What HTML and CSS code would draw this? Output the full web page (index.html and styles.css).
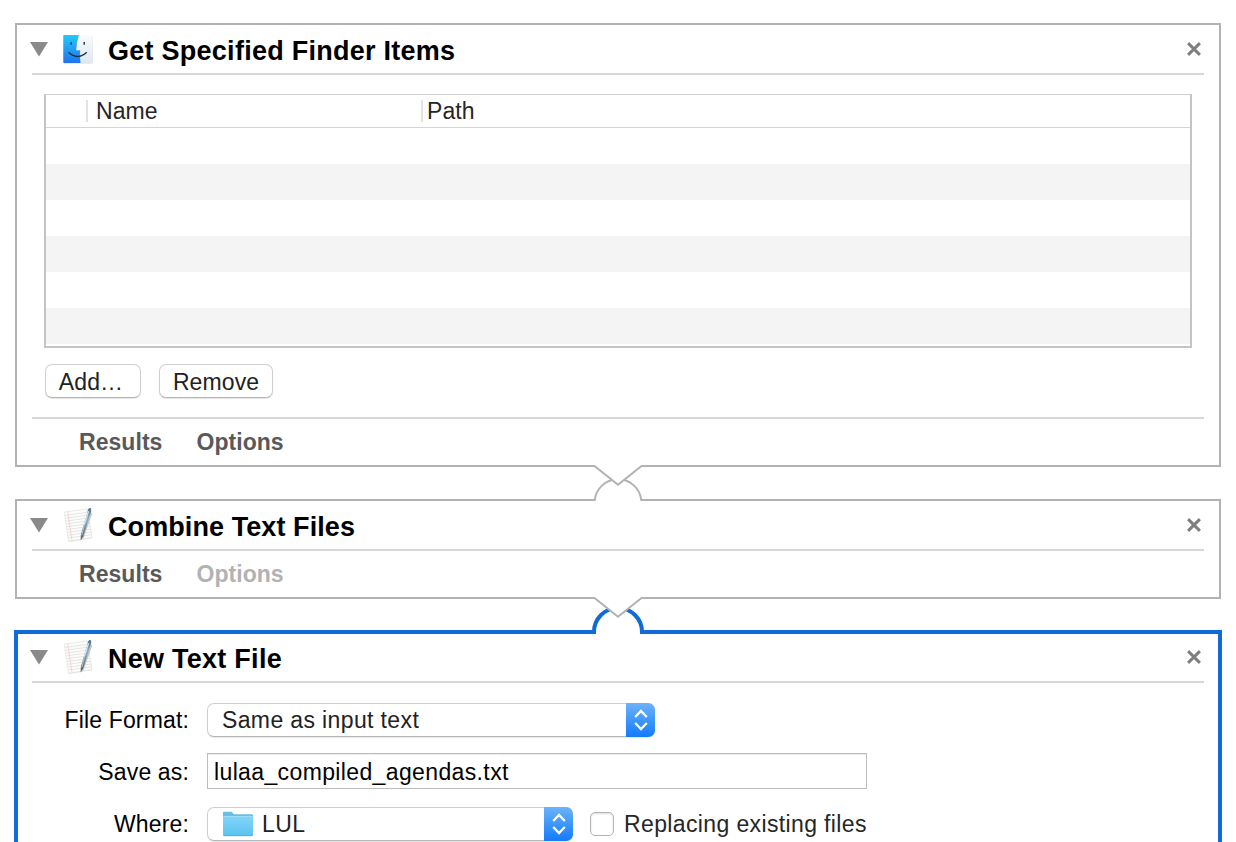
FILE: index.html
```html
<!DOCTYPE html>
<html lang="en">
<head>
<meta charset="utf-8">
<title>Workflow</title>
<link rel="stylesheet" href="styles.css">
</head>
<body>
<svg class="defs" width="0" height="0" aria-hidden="true">
  <defs>
    <linearGradient id="face-left" x1="0" y1="0" x2="0" y2="1"><stop offset="0" stop-color="#20cbfb"/><stop offset="1" stop-color="#2272ec"/></linearGradient>
    <linearGradient id="face-right" x1="0" y1="0" x2="0" y2="1"><stop offset="0" stop-color="#fafbfc"/><stop offset="1" stop-color="#dfe7f0"/></linearGradient>
    <linearGradient id="folder-front" x1="0" y1="0" x2="0" y2="1"><stop offset="0" stop-color="#81d4f8"/><stop offset="1" stop-color="#5bc3f1"/></linearGradient>
    <linearGradient id="pen" x1="0" y1="0" x2="0" y2="1"><stop offset="0" stop-color="#557087"/><stop offset=".35" stop-color="#8fb0c8"/><stop offset="1" stop-color="#565a5e"/></linearGradient>
    <symbol id="cross" viewBox="0 0 14 14"><path d="M1.1 1.1 12.9 12.9M12.9 1.1 1.1 12.9" fill="none" stroke="#7f7f7f" stroke-width="2.9"/></symbol>
    <symbol id="triangle" viewBox="0 0 18 15"><path d="M0 0H18L9 14.6Z" fill="#8a8a8a"/></symbol>
    <symbol id="chevrons" viewBox="0 0 14 22"><path d="M1.2 8 7 2 12.8 8M1.2 14 7 20 12.8 14" fill="none" stroke="#fff" stroke-width="2.3"/></symbol>
    <symbol id="textedit" viewBox="0 0 32 36">
      <path d="M2.6 5.6 25 2.4 30.4 31 7 35Z" fill="#dcdcdc"/>
      <path d="M2.2 5 25 1.9 30 30.6 6.6 34.2Z" fill="#fcfcfb" stroke="#e2e2e2" stroke-width=".7"/>
      <path d="M3 8.5 25.6 5.4M3.4 11.3 26 8.2M3.8 14.1 26.5 11M4.3 16.9 27 13.8M4.8 19.7 27.4 16.6M5.2 22.5 27.9 19.4M5.7 25.3 28.3 22.2M6.1 28.1 28.8 25M6.6 30.9 29.2 27.8" stroke="#e2e2e2" stroke-width=".9"/>
      <path d="M5.6 4.8 10 33.4" stroke="#f7cdc8" stroke-width=".8"/>
      <path d="M29.6 6 20.6 31.5" stroke="#c4c4c4" stroke-width="1.5"/>
      <path d="M26.2 2.2Q27.6.4 29.2 1.6L29.2 4.6 21.2 29.6 18.6 33.6 18.8 28Z" fill="url(#pen)"/>
      <path d="M26.5 4.2 22.2 17.8" stroke="#d2e7f4" stroke-width="1.3"/>
      <path d="M22.2 18.4 19.8 28.4" stroke="#c4c4c4" stroke-width=".9"/>
    </symbol>
  </defs>
</svg>

<main class="workflow">
  <section class="action">
    <header class="action-head">
      <svg class="triangle"><use href="#triangle"/></svg>
      <svg class="app-icon" viewBox="0 0 32 36">
        <rect x="1.5" y="4.6" width="29" height="28" rx="1" fill="#cfd4da"/>
        <rect x="1.5" y="4" width="29" height="28" rx="1" fill="url(#face-right)"/>
        <path d="M2 4H16.8Q14.2 11 14 19.5H18Q17.4 26 18.4 32H2.2Q1.3 32 1.3 31V5Q1.3 4 2 4Z" fill="url(#face-left)"/>
        <path d="M16.8 4.2Q14.2 11 14 19.5H18Q17.5 26 18.4 32" fill="none" stroke="#28659b" stroke-opacity=".35" stroke-width=".6"/>
        <path d="M9.2 10.9V13.7M22.2 10.9V13.7" stroke="#17314c" stroke-width="1.4"/>
        <path d="M6.5 21.3Q15.6 29.8 24.8 21.3" fill="none" stroke="#17314c" stroke-width="1.3"/>
      </svg>
      <h2 class="title">Get Specified Finder Items</h2>
      <svg class="cross"><use href="#cross"/></svg>
    </header>
    <div class="items">
      <div class="table">
        <div class="table-head"><span class="col-icon"></span><span class="col-name">Name</span><span class="col-path">Path</span></div>
        <div class="row"></div><div class="row"></div><div class="row"></div><div class="row"></div><div class="row"></div><div class="row"></div>
      </div>
      <div class="buttons"><button class="button add">Add…</button><button class="button remove">Remove</button></div>
    </div>
    <footer class="action-foot ruled"><span class="tab">Results</span><span class="tab">Options</span></footer>
    <svg class="connector" viewBox="0 0 56 48">
      <path d="M4.5 37V36A23.5 23.5 0 0 1 51.5 36V37Z" fill="#fff"/>
      <path d="M4.7 36V35.5A23.4 23.4 0 0 1 51.3 35.5V36" fill="none" stroke="#b2b2b2" stroke-width="2"/>
      <path d="M4.5 -1V1L28 20 51.5 1V-1Z" fill="#fff"/>
      <path d="M4.2 .7 28 19.8 51.8 .7" fill="none" stroke="#b2b2b2" stroke-width="2"/>
    </svg>
  </section>

  <section class="action">
    <header class="action-head">
      <svg class="triangle"><use href="#triangle"/></svg>
      <svg class="app-icon"><use href="#textedit"/></svg>
      <h2 class="title tight">Combine Text Files</h2>
      <svg class="cross"><use href="#cross"/></svg>
    </header>
    <footer class="action-foot"><span class="tab">Results</span><span class="tab disabled">Options</span></footer>
    <svg class="connector" viewBox="0 0 56 48">
      <path d="M4 37V35A24 24 0 0 1 52 35V37Z" fill="#fff"/>
      <path d="M4 37V35A24 24 0 0 1 52 35V37" fill="none" stroke="#116bd6" stroke-width="4"/>
      <path d="M4.5 -1V1L28 20 51.5 1V-1Z" fill="#fff"/>
      <path d="M4.2 .7 28 19.8 51.8 .7" fill="none" stroke="#b2b2b2" stroke-width="2"/>
    </svg>
  </section>

  <section class="action selected">
    <header class="action-head">
      <svg class="triangle"><use href="#triangle"/></svg>
      <svg class="app-icon"><use href="#textedit"/></svg>
      <h2 class="title">New Text File</h2>
      <svg class="cross"><use href="#cross"/></svg>
    </header>
    <div class="form">
      <span class="label">File Format:</span>
      <div class="field"><div class="select format"><span class="value">Same as input text</span><span class="stepper"><svg class="chevrons"><use href="#chevrons"/></svg></span></div></div>
      <span class="label">Save as:</span>
      <div class="field"><div class="input">lulaa_compiled_agendas.txt</div></div>
      <span class="label">Where:</span>
      <div class="field">
        <div class="select where">
          <svg class="folder" viewBox="0 0 32 26">
            <path d="M1 24V2Q1 .8 2.2.8H9.5L12 3.2H29.8Q31 3.2 31 4.5V24Z" fill="#67bfe6"/>
            <path d="M1 5.5H31V24Q31 24.8 30 24.8H2Q1 24.8 1 24Z" fill="url(#folder-front)"/>
            <path d="M1.5 5.5H30.5" stroke="#a5e2fb" stroke-width=".8"/>
            <path d="M1.5 24.7H30.5" stroke="#4ba6d0" stroke-width=".9"/>
          </svg>
          <span class="value">LUL</span><span class="stepper"><svg class="chevrons"><use href="#chevrons"/></svg></span>
        </div>
        <span class="checkbox"></span><span class="check-label">Replacing existing files</span>
      </div>
    </div>
  </section>
</main>
</body>
</html>
```

FILE: styles.css
```css
* { box-sizing: border-box; }

body {
  margin: 0;
  height: 842px;
  overflow: hidden;
  background: #fff;
  color: #262626;
  font: 23px/34px "Liberation Sans", Arial, sans-serif;
  letter-spacing: 0.37px;
  white-space: nowrap;
}

svg { display: block; flex: none; }
.defs { position: absolute; }

.workflow {
  display: flex;
  flex-direction: column;
  padding: 23px 15px 0;
}

.action {
  position: relative;
  margin-bottom: 32px;
  border: 2px solid #b2b2b2;
  background: #fff;
}

.action.selected {
  height: 240px;
  margin: -1px -1px 0;
  border: 4px solid #116bd6;
}

.action-head {
  display: flex;
  align-items: center;
  height: 50px;
  margin: 0 15px;
  padding-right: 3px;
  border-bottom: 2px solid #d8d8d8;
}

.selected .action-head { margin: -1px 14px 0; }

.triangle { width: 18px; height: 15px; margin-left: -2px; }
.app-icon { width: 32px; height: 36px; margin-left: 14px; }

.title {
  margin: 0 auto 0 14px;
  padding-top: 5px;
  color: #000;
  font-size: 27px;
  line-height: 43px;
  letter-spacing: 0.26px;
}

.title.tight { letter-spacing: 0.08px; }

.cross { width: 14px; height: 14px; }

.items { padding: 19px 27px 18px; }

.table {
  height: 254px;
  border: 2px solid #c4c4c4;
  border-top: 1px solid #cfcfcf;
}

.table-head {
  display: flex;
  align-items: center;
  height: 33px;
  padding-bottom: 1px;
  border-bottom: 1px solid #d4d4d4;
  line-height: 30px;
  letter-spacing: 0.1px;
}

.col-icon { width: 42px; height: 22px; border-right: 2px solid #e2e2e2; }
.col-name { width: 334px; padding-left: 8px; }
.col-path { height: 22px; margin-left: -1px; padding-left: 4px; border-left: 2px solid #e2e2e2; line-height: 22px; }

.row { height: 36px; }
.row:nth-child(odd) { background: #f4f4f4; }

.buttons { display: flex; gap: 18px; height: 51px; padding: 16px 0 0 1px; }

.button {
  height: 34px;
  padding: 2px 0 0;
  border: 1px solid #cfcfcf;
  border-bottom-color: #b5b5b5;
  border-radius: 7px;
  background: #fff;
  box-shadow: 0 1px 1px rgba(0, 0, 0, 0.1);
  color: #222;
  font: inherit;
  line-height: 31px;
  letter-spacing: 0.1px;
}

.add { width: 96px; padding-right: 4px; }
.remove { width: 114px; }

.action-foot {
  display: flex;
  gap: 34px;
  height: 46px;
  margin: 0 15px;
  padding: 6px 0 0 47px;
  color: #595959;
  font-weight: bold;
  letter-spacing: 0.05px;
}

.action-foot.ruled { height: 48px; border-top: 2px solid #d8d8d8; }
.disabled { color: #b2b2b2; }

.connector {
  position: absolute;
  z-index: 1;
  bottom: -48px;
  left: 573px;
  width: 56px;
  height: 48px;
  overflow: visible;
}

.form {
  display: grid;
  grid-template-columns: 171px 1fr;
  column-gap: 18px;
  row-gap: 16px;
  margin-top: 20px;
  color: #000;
}

.label { height: 36px; line-height: 35px; text-align: right; letter-spacing: 0.15px; }
.field { display: flex; align-items: flex-start; height: 36px; }

.select {
  display: flex;
  align-items: center;
  height: 34px;
  border: 1px solid #cfcfcf;
  border-bottom-color: #b5b5b5;
  border-radius: 7px;
  box-shadow: 0 1px 1px rgba(0, 0, 0, 0.1);
  color: #222;
}

.format { width: 448px; padding-left: 14px; }
.where { width: 366px; padding-left: 14px; }
.value { flex: 1; line-height: 33px; }

.stepper {
  display: flex;
  align-items: center;
  justify-content: center;
  width: 29px;
  height: 34px;
  margin: -1px;
  border-radius: 0 7px 7px 0;
  background: linear-gradient(#6cb3fa, #3a94fb 55%, #157afc);
}

.chevrons { width: 14px; height: 22px; }

.input {
  width: 660px;
  height: 36px;
  margin-top: -2px;
  padding-left: 6px;
  border: 1px solid #bcbcbc;
  box-shadow: inset 0 1px #ededed;
  line-height: 36px;
}

.folder { width: 32px; height: 26px; margin-right: 8px; }

.checkbox {
  width: 24px;
  height: 24px;
  margin: 5px 10px 0 17px;
  border: 1px solid #b4b4b4;
  border-radius: 5px;
  box-shadow: inset 0 1px 2px rgba(0, 0, 0, 0.15);
}

.check-label { color: #262626; line-height: 35px; }
```
